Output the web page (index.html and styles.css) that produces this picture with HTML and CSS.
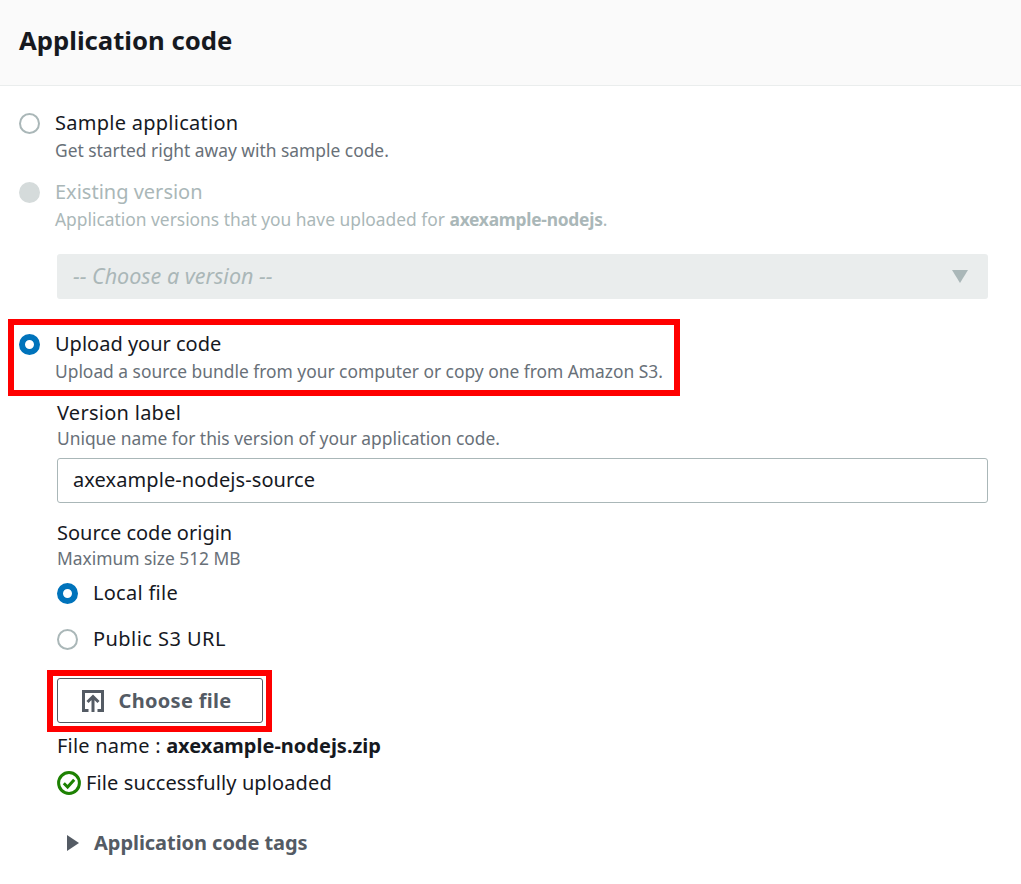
FILE: index.html
```html
<!DOCTYPE html>
<html lang="en">
<head>
<meta charset="utf-8">
<title>Application code</title>
<link rel="stylesheet" href="styles.css">
</head>
<body>
<section class="panel">
  <header class="panel-header"><h2 class="panel-title">Application code</h2></header>
  <div class="panel-body">
    <div class="option option-first">
      <span class="radio"></span>
      <div>
        <div class="option-label wide">Sample application</div>
        <div class="hint">Get started right away with sample code.</div>
      </div>
    </div>
    <div class="option option-disabled">
      <span class="radio radio-disabled"></span>
      <div>
        <div class="option-label">Existing version</div>
        <div class="hint">Application versions that you have uploaded for <b>axexample-nodejs</b>.</div>
      </div>
    </div>
    <div class="nested select-wrap">
      <div class="select">
        <span>-- Choose a version --</span>
        <svg class="caret" width="16" height="13" viewBox="0 0 16 13"><path d="M0 0H16L8 13Z" fill="#aab7b8"/></svg>
      </div>
    </div>
    <div class="option option-upload">
      <span class="radio radio-on"></span>
      <div>
        <div class="option-label">Upload your code</div>
        <div class="hint">Upload a source bundle from your computer or copy one from Amazon S3.</div>
      </div>
      <span class="mark mark-upload"></span>
    </div>
    <div class="nested">
      <div class="field-label label-version wide">Version label</div>
      <div class="hint hint-version">Unique name for this version of your application code.</div>
      <div class="input">axexample-nodejs-source</div>
      <div class="field-label label-origin">Source code origin</div>
      <div class="hint hint-origin">Maximum size 512 MB</div>
      <div class="option option-local">
        <span class="radio radio-on"></span>
        <div class="option-label wide">Local file</div>
      </div>
      <div class="option option-public">
        <span class="radio"></span>
        <div class="option-label wider">Public S3 URL</div>
      </div>
      <div class="button-wrap">
        <div class="button">
          <svg width="22" height="22" viewBox="0 0 22 22" fill="none" stroke="#545b64" stroke-width="3">
            <path d="M6.500 20.500H1.500V1.500H20.500V20.500H15.500"/>
            <path d="M11 22V7M5.500 12L11 6.500L16.500 12"/>
          </svg>
          <span>Choose file</span>
        </div>
        <span class="mark mark-button"></span>
      </div>
      <div class="file-name">File name : <b>axexample-nodejs.zip</b></div>
      <div class="success">
        <svg width="24" height="24" viewBox="0 0 24 24" fill="none" stroke="#1d8102">
          <circle cx="12" cy="12" r="10.400" stroke-width="3"/>
          <path d="M6.800 12.300L10.600 16L17.200 8.800" stroke-width="3"/>
        </svg>
        <span>File successfully uploaded</span>
      </div>
      <div class="tags">
        <svg width="14" height="16" viewBox="0 0 14 16"><path d="M1 0L13 8L1 16Z" fill="#545b64"/></svg>
        <span>Application code tags</span>
      </div>
    </div>
  </div>
</section>
</body>
</html>
```
FILE: styles.css
```css
* { box-sizing: border-box; }
html, body { margin: 0; background: #fff; }
body {
  font-family: "Noto Sans", "Open Sans", sans-serif;
  color: #16191f;
  font-size: 20px;
  height: 884px;
  overflow: hidden;
}
.panel-header {
  height: 86px;
  background: #fafafa;
  border-bottom: 1px solid #eaeded;
  padding: 0 19px;
  display: flex;
  align-items: center;
}
.panel-title { margin: 0 0 3px; font-size: 25.700px; font-weight: 700; line-height: 34px; }
.panel-body { padding: 0 33px 0 19px; }
.option { display: flex; position: relative; }
.option-first { margin-top: 23px; }
.option-disabled { margin-top: 14px; color: #aab7b8; }
.option-disabled .hint { color: #aab7b8; }
.option-upload { margin-top: 31px; }
.radio {
  flex: none;
  width: 21px;
  height: 21px;
  margin: 4px 15px 0 0;
  border-radius: 50%;
  border: 2px solid #aab7b8;
  background: #fff;
}
.radio-disabled { background: #d5dbdb; border-color: #d5dbdb; }
.radio-on { border: 6px solid #0073bb; }
.option-label, .field-label { font-size: 20px; line-height: 28px; }
.wide { letter-spacing: 0.270px; }
.wider { letter-spacing: 0.450px; }
.hint { font-size: 17.400px; line-height: 27px; color: #687078; letter-spacing: -0.010px; }
.hint b { font-weight: 700; letter-spacing: -0.250px; }
.nested { margin-left: 38px; }
.select-wrap { margin-top: 21px; }
.select {
  height: 45px;
  background: #eaeded;
  border-radius: 3px;
  padding: 0 20px 0 16px;
  display: flex;
  align-items: center;
  justify-content: space-between;
  color: #aab7b8;
  font-style: italic;
  font-size: 21.500px;
}
.select span { margin-top: -2px; }
.label-version { margin-top: 14px; }
.hint-version { margin-top: -2px; }
.input {
  margin-top: 6px;
  height: 45px;
  border: 1px solid #aab7b8;
  border-radius: 3px;
  padding: 0 15px 2px;
  display: flex;
  align-items: center;
  letter-spacing: 0.090px;
}
.label-origin { margin-top: 16px; }
.hint-origin { margin-top: -2px; }
.option-local { margin-top: 7px; height: 28px; align-items: center; }
.option-public { margin-top: 18px; height: 28px; align-items: center; }
.option-local .radio, .option-public .radio { margin-top: 0; }
.button-wrap { position: relative; width: 206px; margin-top: 25px; }
.button {
  height: 45px;
  border: 1px solid #545b64;
  border-radius: 3px;
  display: flex;
  align-items: center;
  justify-content: center;
  gap: 15px;
  padding-right: 7px;
  color: #545b64;
  font-weight: 700;
  letter-spacing: 0.300px;
}
.mark { position: absolute; border: 6px solid #f00; pointer-events: none; }
.mark-upload { left: -11px; top: -11px; width: 672px; height: 77px; }
.mark-button { left: -10px; top: -8px; width: 225px; height: 62px; }
.file-name { margin-top: 9px; line-height: 28px; font-size: 20px; letter-spacing: 0.220px; }
.file-name b { font-weight: 700; letter-spacing: 0; }
.success { margin-top: 9px; display: flex; align-items: center; gap: 5px; line-height: 28px; letter-spacing: 0.120px; }
.tags {
  margin: 32px 0 0 9px;
  display: flex;
  align-items: center;
  gap: 14px;
  line-height: 28px;
  color: #545b64;
  font-weight: 700;
  letter-spacing: -0.050px;
}
```
